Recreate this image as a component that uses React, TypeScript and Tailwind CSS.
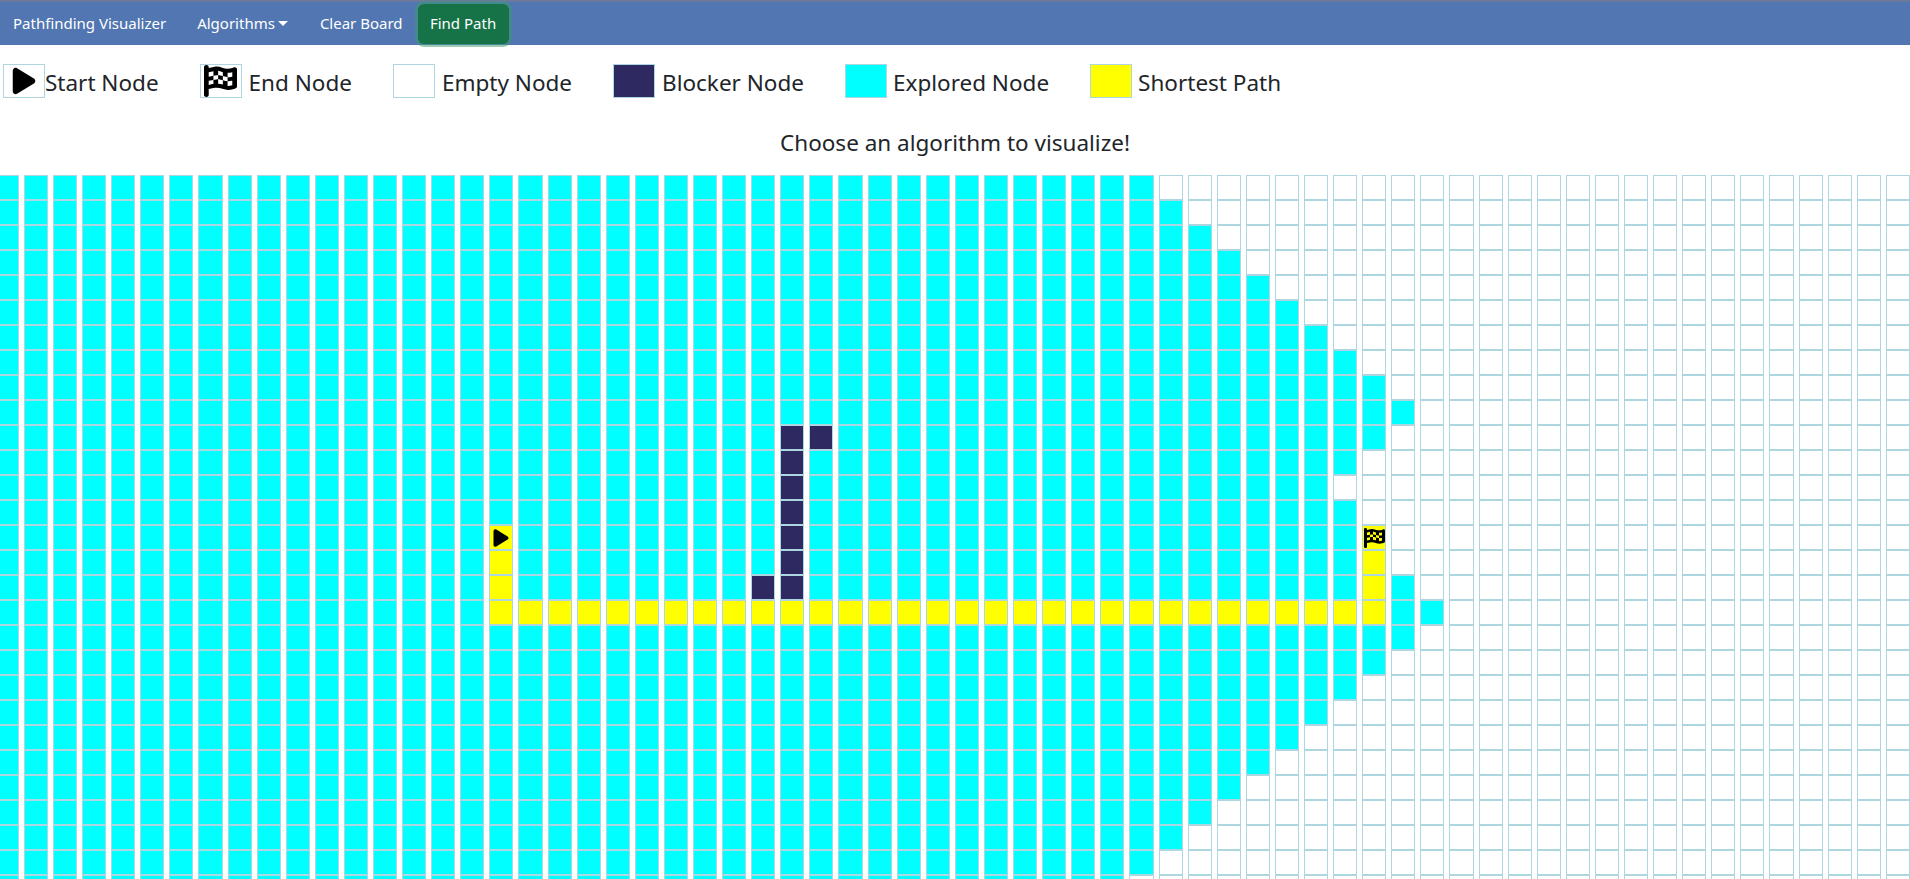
import React from 'react';
import { FaPlay, FaFlagCheckered } from 'react-icons/fa6';

const COLS = 66;
const ROWS = 29;

type Kind = 'empty' | 'explored' | 'blocker' | 'path';

const cellClass: Record<Kind, string> = {
  empty: 'bg-white',
  explored: 'bg-[#00ffff]',
  blocker: 'bg-[#2e2960]',
  path: 'bg-[#ffff00]',
};

// first and last explored row per column, past the full block on the left
const exploredRuns: Record<number, [number, number][]> = {
  39: [[0, 27]],
  40: [[1, 26]],
  41: [[2, 25]],
  42: [[3, 24]],
  43: [[4, 23]],
  44: [[5, 22]],
  45: [[6, 21]],
  46: [[7, 11], [13, 20]],
  47: [[8, 10], [18, 19]],
  48: [[9, 9], [16, 18]],
  49: [[17, 17]],
};

const blockers = new Set(['10-27', '11-27', '12-27', '13-27', '14-27', '15-27', '16-27', '10-28', '16-26']);

const getKind = (row: number, col: number): Kind => {
  if (blockers.has(`${row}-${col}`)) return 'blocker';
  if (row === 17 && col >= 17 && col <= 47) return 'path';
  if ((col === 17 || col === 47) && row >= 14 && row <= 17) return 'path';
  if (col <= 38) return 'explored';
  const runs = exploredRuns[col] || [];
  return runs.some(([from, to]) => row >= from && row <= to) ? 'explored' : 'empty';
};

const Swatch: React.FC<{ className?: string; children?: React.ReactNode }> = ({ className, children }) => (
  <span className={`flex h-[34px] w-[42px] shrink-0 items-center justify-center border border-[#aed6e0] ${className || 'bg-white'}`}>
    {children}
  </span>
);

const legend = [
  { label: 'Start Node', swatch: 'bg-white', icon: <FaPlay className="h-[30px] w-[30px] text-black" />, gap: 'ml-0', spacing: 'mr-[41px]' },
  { label: 'End Node', swatch: 'bg-white', icon: <FaFlagCheckered preserveAspectRatio="none" className="h-[32px] w-[33px] text-black" />, gap: 'ml-[7px]', spacing: 'mr-[41px]' },
  { label: 'Empty Node', swatch: 'bg-white', gap: 'ml-[7px]', spacing: 'mr-[41px]' },
  { label: 'Blocker Node', swatch: 'bg-[#2e2960]', gap: 'ml-[7px]', spacing: 'mr-[41px]' },
  { label: 'Explored Node', swatch: 'bg-[#00ffff]', gap: 'ml-[6px]', spacing: 'mr-[41px]' },
  { label: 'Shortest Path', swatch: 'bg-[#ffff00]', gap: 'ml-[6px]', spacing: '' },
];

const App: React.FC = () => {
  const cells = [];
  for (let row = 0; row < ROWS; row++) {
    for (let col = 0; col < COLS; col++) {
      cells.push(
        <div
          key={`${row}-${col}`}
          className={`flex h-[25px] items-center justify-center border border-[#aed6e0] ${cellClass[getKind(row, col)]}`}
        >
          {row === 14 && col === 17 && <FaPlay className="h-[20px] w-[20px] text-black" />}
          {row === 14 && col === 47 && <FaFlagCheckered preserveAspectRatio="none" className="h-[20px] w-[21px] shrink-0 text-black" />}
        </div>
      );
    }
  }

  return (
    <div className="h-screen overflow-hidden bg-white font-['Noto_Sans',sans-serif] text-[#212529]">
      <nav className="flex h-[45px] items-center border-t-2 border-[#6b7a9c] bg-[#5176b1] text-[15px] text-white">
        <a className="ml-[13px] mr-[18px]">Pathfinding Visualizer</a>
        <a className="mr-[6px] flex items-center px-[13px]">
          Algorithms
          <span className="ml-[3px] h-0 w-0 border-x-[5px] border-t-[5px] border-x-transparent border-t-white" />
        </a>
        <a className="mr-[2px] px-[13px]">Clear Board</a>
        <button className="flex h-[40px] w-[91px] items-center justify-center rounded-md bg-[#157347] shadow-[0_0_0_3px_rgba(60,153,110,0.5)]">
          Find Path
        </button>
      </nav>

      <div className="mt-[19px] flex h-[34px] items-center pl-[3px] text-[22.5px]">
        {legend.map((item) => (
          <div key={item.label} className={`flex items-center ${item.spacing}`}>
            <Swatch className={item.swatch}>{item.icon}</Swatch>
            <span className={`mt-[4px] ${item.gap}`}>{item.label}</span>
          </div>
        ))}
      </div>

      <p className="mt-[27px] h-[50px] text-center text-[22.5px] leading-[36px]">Choose an algorithm to visualize!</p>

      <div className="-ml-[5.25px] grid grid-cols-[repeat(66,24.1px)] gap-x-[5px]">{cells}</div>
    </div>
  );
};

export default App;
